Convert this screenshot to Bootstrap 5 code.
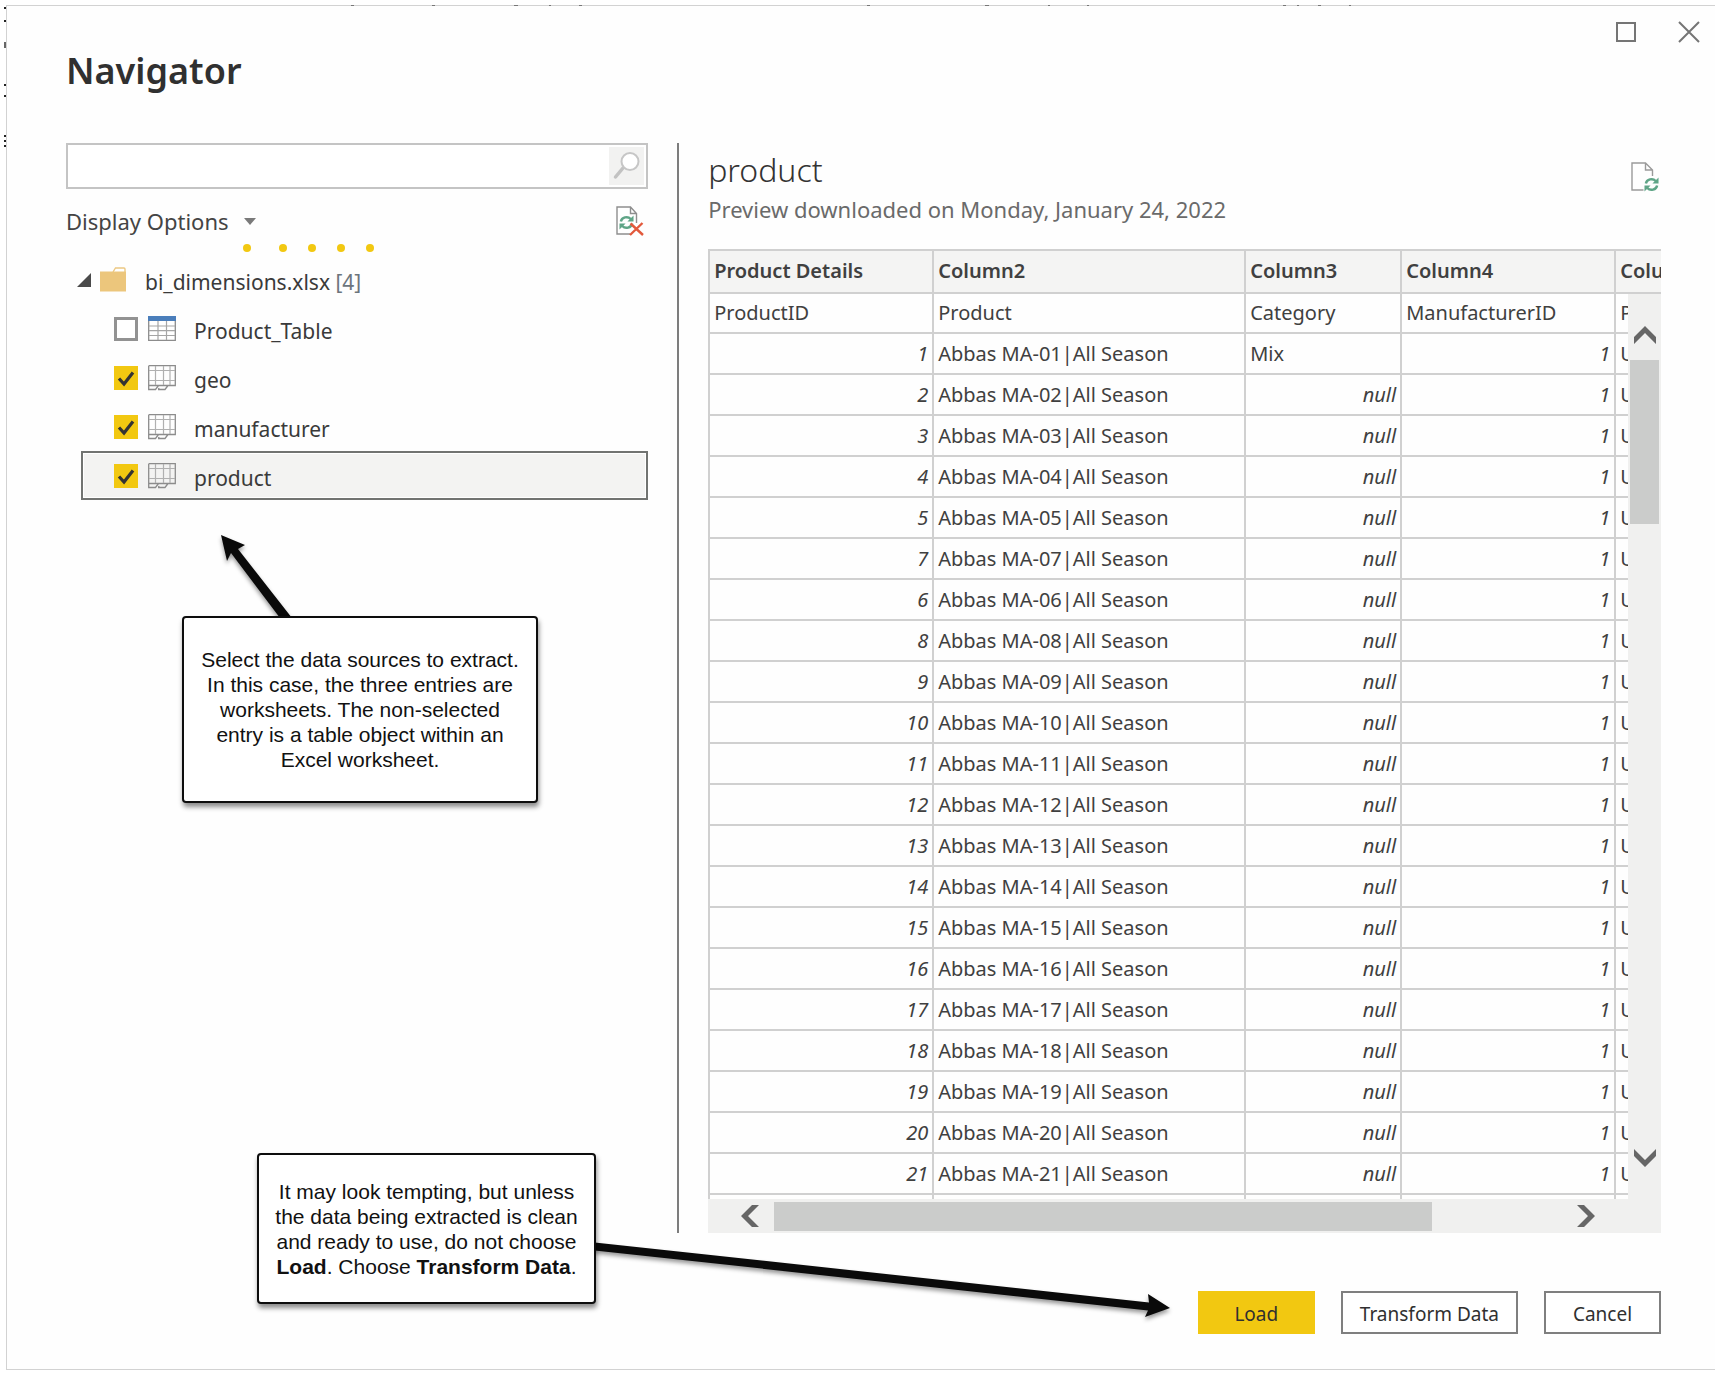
<!DOCTYPE html>
<html lang="en">
<head>
<meta charset="utf-8">
<meta name="viewport" content="width=device-width, initial-scale=1">
<title>Navigator</title>
<link rel="stylesheet" href="https://cdn.jsdelivr.net/npm/bootstrap@5.3.0/dist/css/bootstrap.min.css">
<style>
  :root {
    --ui: "Noto Sans", "Open Sans", sans-serif;
    --ink: #3a3a3a;
    --line: #d0d0d0;
    --gold: #f2c811;
  }
  body { background: #fff; font-family: var(--ui); color: var(--ink); }
  button { font-family: inherit; }

  .dialog-frame { margin: 5px 5px 0 6px; border: 1px solid #d2d2d2; border-right: 0; background: #fefefe; }
  .dialog-head { padding: 15px 15px 48px 59px; }
  .dialog-title { margin: 26px 0 0; font-size: 36px; line-height: 48px; font-weight: 600; color: #303030; }
  .win-btn { width: 22px; height: 22px; }
  .win-gap { gap: 41px; }
  .plain-btn { padding: 0; border: 0; background: none; display: flex; align-items: center; justify-content: center; }
  .plain-btn svg, .tree-row svg, .search-btn svg { display: block; flex: none; }

  .dialog-main { padding: 0 54px 0 59px; }
  .source-pane { flex: 0 0 36.5%; min-width: 0; }
  .preview-pane { flex: 1 1 0; min-width: 0; margin-left: 29px; padding-left: 29px; border-left: 2px solid #7d7d7d; }

  .search-box { height: 46px; border: 2px solid #c4c4c4; background: #fff; padding: 2px; }
  .search-box input { border: 0; border-radius: 0; box-shadow: none; background: transparent; font-size: 21px; }
  .search-btn { width: 35px; background: #f2f2f1; flex: none; border: 0; padding: 0; display: flex; align-items: center; justify-content: center; }

  .options-bar { margin-top: 15px; height: 34px; }
  .options-bar .options-btn { font-size: 22px; line-height: 34px; gap: 15px; color: #444; }
  .busy-dots { height: 10px; margin-top: 5px; padding-left: 177px; gap: 21px; }
  .busy-dots span { width: 8px; height: 8px; border-radius: 50%; background: var(--gold); }
  .busy-dots span:first-child { margin-right: 7px; }

  .tree-list { margin: 2px 0 0; padding: 0; list-style: none; font-size: 21px; line-height: 30px; }
  .tree-row { height: 49px; display: flex; align-items: center; }
  .tree-root { padding-left: 11px; }
  .tree-leaf { margin-left: 15px; padding-left: 31px; border: 2px solid transparent; }
  .tree-leaf.is-current { border-color: #717371; background: #f3f3f2; box-shadow: inset 0 0 0 1px #fff; }
  .tree-text { padding-top: 4px; }
  .tree-root .tree-text { margin-left: 18px; }
  .tree-leaf .tree-text { margin-left: 18px; cursor: pointer; flex: 1; }
  .tick { appearance: none; width: 24px; height: 24px; margin: 0 10px 0 0; flex: none; border: 3px solid #929292; background: #fff; }
  .tick:checked { border: 0; background: var(--gold) url("data:image/svg+xml,%3Csvg xmlns='http://www.w3.org/2000/svg' viewBox='0 0 24 24'%3E%3Cpath d='M5 12.500l5 5.500L19 6.500' fill='none' stroke='%23333' stroke-width='3.200'/%3E%3C/svg%3E"); }

  .preview-head { padding-top: 5px; }
  .preview-name { margin: 0; font-size: 32px; line-height: 44px; font-weight: 300; color: #333; }
  .preview-note { margin: 0; font-size: 22px; line-height: 34px; color: #6a6a6a; }
  .doc-btn { margin: 14px 2px 0 0; }

  .grid-shell { margin-top: 23px; }
  .grid-view { height: 950px; overflow: hidden; }
  .data-grid { width: 1110px; table-layout: fixed; border-collapse: separate; border-spacing: 0; border-top: 2px solid var(--line); border-left: 2px solid var(--line); font-size: 20px; line-height: 30px; color: #404040; }
  .data-grid th, .data-grid td { padding: 0 4px; height: 41px; border-right: 2px solid var(--line); border-bottom: 2px solid var(--line); vertical-align: middle; white-space: nowrap; overflow: hidden; background: #fefefe; }
  .data-grid th { height: 43px; padding-bottom: 2px; background: #f4f4f3; font-weight: 600; text-align: left; }
  .data-grid tr.label-row td { height: 40px; }
  .data-grid td.num { text-align: right; font-style: italic; }
  .w-a { width: 224px; } .w-b { width: 312px; } .w-c { width: 156px; } .w-d { width: 214px; }

  .v-bar { position: absolute; top: 45px; right: 0; bottom: 0; width: 33px; background: #f0f0ef; padding: 32px 2px 32px; }
  .h-bar { height: 34px; background: #f0f0ef; padding: 2px 66px 2px 33px; }
  .thumb { background: #cbcccb; }
  .v-bar .thumb { height: 164px; margin-top: 16px; }
  .h-bar .thumb { height: 29px; width: 77%; margin-left: 15px; }

  .dialog-foot { padding: 58px 54px 35px 59px; gap: 26px; }
  .dialog-foot .btn { height: 43px; min-width: 117px; border-radius: 0; font-size: 19px; line-height: 30px; padding: 2px 17px 0; border: 2px solid #7f7f7f; background: #fff; color: #303030; }
  .dialog-foot .btn.btn-load { background: var(--gold); border-color: var(--gold); }

  .callout-note { position: absolute; display: flex; align-items: center; justify-content: center; text-align: center; background: #fff; color: #111; border: 2px solid #0d0d0d; border-radius: 4px; box-shadow: 1px 4px 5px rgba(0,0,0,.45); font-family: "Liberation Sans", Arial, sans-serif; font-size: 21px; line-height: 25px; white-space: nowrap; }
  .note-sources { left: 182px; top: 616px; width: 356px; height: 187px; }
  .note-load { left: 257px; top: 1153px; width: 339px; height: 151px; }
  .overlay-art { position: absolute; left: 0; top: 0; pointer-events: none; filter: drop-shadow(0 3px 2px rgba(0,0,0,.4)); }
  .edge-marks { position: absolute; left: 0; top: 0; pointer-events: none; }
</style>
<script src="https://cdn.jsdelivr.net/npm/bootstrap@5.3.0/dist/js/bootstrap.bundle.min.js"></script>
</head>
<body class="position-relative">

<svg width="0" height="0" class="position-absolute" aria-hidden="true">
  <symbol id="sheet" viewBox="0 0 28 26">
    <path d="M.7 .7H27.300V20.500H20l-3 4H11.500l-1-1.500M.7 .7V20.500H20M.7 20.500V24.500H7.500l3-4M10 24.500h6" fill="none" stroke="#8c8c8c" stroke-width="1.300"/>
    <path d="M1 5.500H27M1 15.500H27M7.500 1V20M15.500 1V20M22 1V20" fill="none" stroke="#b0b0b0" stroke-width="1.200"/>
  </symbol>
  <symbol id="cycle" viewBox="0 0 16 16">
    <path d="M2 7A6 5.500 0 0 1 12.500 4.300M14 9A6 5.500 0 0 1 3.500 11.700" fill="none" stroke="#5fa587" stroke-width="2.600"/>
    <path d="M15.500 .5V7H9zM.5 15.500V9H7z" fill="#5fa587"/>
  </symbol>
</svg>

<main class="dialog-frame">
  <header class="dialog-head d-flex justify-content-between align-items-start">
    <h1 class="dialog-title">Navigator</h1>
    <div class="d-flex win-gap">
      <button type="button" class="plain-btn win-btn" aria-label="Maximize"><svg width="20" height="20"><rect x="1" y="1" width="18" height="18" fill="none" stroke="#757575" stroke-width="2"/></svg></button>
      <button type="button" class="plain-btn win-btn" aria-label="Close"><svg width="22" height="22"><path d="M1 1L21 21M21 1L1 21" stroke="#757575" stroke-width="2"/></svg></button>
    </div>
  </header>

  <div class="dialog-main d-flex">
    <section class="source-pane" aria-label="Sources">
      <div class="search-box d-flex">
        <input type="search" class="form-control" aria-label="Search">
        <button type="button" class="search-btn" aria-label="Run search"><svg width="28" height="30"><path d="M10 17L2.500 26" stroke="#c2c2c2" stroke-width="3.500" stroke-linecap="round"/><circle cx="17" cy="10.500" r="8.500" fill="#fff" stroke="#c6c6c6" stroke-width="2"/></svg></button>
      </div>

      <div class="options-bar d-flex justify-content-between align-items-center">
        <button type="button" class="plain-btn options-btn">Display Options<svg width="12" height="7"><path d="M0 0H12L6 7z" fill="#7a7a7a"/></svg></button>
        <button type="button" class="plain-btn me-1" aria-label="Cancel refresh">
          <svg width="28" height="30" viewBox="0 0 28 30"><path d="M20.500 17V7.500L14.500 1H1V28H14M14.500 1V7.500H20.500" fill="#fff" stroke="#8e8e8e" stroke-width="1.400"/><use href="#cycle" x="3" y="9" width="15" height="15"/><path d="M14.500 17.500L27 29M26.500 17L14 29" stroke="#e2593c" stroke-width="2.400"/></svg>
        </button>
      </div>
      <div class="busy-dots d-flex align-items-center" role="status" aria-label="Loading"><span></span><span></span><span></span><span></span><span></span></div>

      <ul class="tree-list">
        <li class="tree-row tree-root">
          <svg width="14" height="14"><path d="M14 0V14H0z" fill="#4a4a4a"/></svg>
          <svg class="ms-2" width="28" height="25" viewBox="0 0 28 25"><path d="M14 5l2.500-4H25q1 0 1 1V5" fill="#fff" stroke="#ecc882" stroke-width="1.400"/><path d="M1 4.500H27V24.500H1z" fill="#ecc67c"/></svg>
          <span class="tree-text">bi_dimensions.xlsx <span class="text-secondary">[4]</span></span>
        </li>
        <li class="tree-row tree-leaf">
          <input class="tick" type="checkbox" id="pick-table">
          <svg width="28" height="25"><path d="M.7 5V24.300H27.300V5" fill="#fff" stroke="#8c8c8c" stroke-width="1.300"/><path d="M1 10H27M1 14.700H27M1 19.500H27M10 5V24M18.500 5V24" stroke="#a5a5a5" stroke-width="1.200"/><path d="M0 0H28V5H0z" fill="#4a7ebb"/></svg>
          <label class="tree-text" for="pick-table">Product_Table</label>
        </li>
        <li class="tree-row tree-leaf">
          <input class="tick" type="checkbox" id="pick-geo" checked>
          <svg width="28" height="26"><use href="#sheet"/></svg>
          <label class="tree-text" for="pick-geo">geo</label>
        </li>
        <li class="tree-row tree-leaf">
          <input class="tick" type="checkbox" id="pick-manufacturer" checked>
          <svg width="28" height="26"><use href="#sheet"/></svg>
          <label class="tree-text" for="pick-manufacturer">manufacturer</label>
        </li>
        <li class="tree-row tree-leaf is-current">
          <input class="tick" type="checkbox" id="pick-product" checked>
          <svg width="28" height="26"><use href="#sheet"/></svg>
          <label class="tree-text" for="pick-product">product</label>
        </li>
      </ul>
    </section>

    <section class="preview-pane" aria-label="Preview">
      <div class="preview-head d-flex justify-content-between align-items-start">
        <div>
          <h2 class="preview-name">product</h2>
          <p class="preview-note">Preview downloaded on Monday, January 24, 2022</p>
        </div>
        <button type="button" class="plain-btn doc-btn" aria-label="Refresh preview">
          <svg width="28" height="30" viewBox="0 0 28 30"><path d="M21.500 14V8L14.500 1H1V28H12.500M14.500 1V8H21.500" fill="none" stroke="#9a9a9a" stroke-width="1.400"/><use href="#cycle" x="13" y="15" width="15" height="15"/></svg>
        </button>
      </div>

      <div class="grid-shell">
        <div class="position-relative">
          <div class="grid-view">
            <table class="data-grid">
              <colgroup><col class="w-a"><col class="w-b"><col class="w-c"><col class="w-d"><col></colgroup>
              <thead><tr><th>Product Details</th><th>Column2</th><th>Column3</th><th>Column4</th><th>Column5</th></tr></thead>
              <tbody id="rows">
                <tr class="label-row"><td>ProductID</td><td>Product</td><td>Category</td><td>ManufacturerID</td><td>PriceBand</td></tr>
              </tbody>
            </table>
          </div>
          <div class="v-bar d-flex flex-column">
            <button type="button" class="plain-btn" aria-label="Scroll up"><svg width="22" height="18"><path d="M0 11L11 0L22 11V18L11 7L0 18z" fill="#666"/></svg></button>
            <div class="thumb"></div>
            <button type="button" class="plain-btn mt-auto" aria-label="Scroll down"><svg width="22" height="18"><path d="M0 7L11 18L22 7V0L11 11L0 0z" fill="#666"/></svg></button>
          </div>
        </div>
        <div class="h-bar d-flex align-items-center">
          <button type="button" class="plain-btn" aria-label="Scroll left"><svg width="18" height="22"><path d="M11 0L0 11L11 22H18L7 11L18 0z" fill="#666"/></svg></button>
          <div class="thumb"></div>
          <button type="button" class="plain-btn ms-auto" aria-label="Scroll right"><svg width="18" height="22"><path d="M7 0L18 11L7 22H0L11 11L0 0z" fill="#666"/></svg></button>
        </div>
      </div>
    </section>
  </div>

  <footer class="dialog-foot d-flex justify-content-end">
    <button type="button" class="btn btn-load">Load</button>
    <button type="button" class="btn">Transform Data</button>
    <button type="button" class="btn">Cancel</button>
  </footer>
</main>

<!-- slivers of the document that shows behind the dialog's edges -->
<svg class="edge-marks" width="1400" height="160" aria-hidden="true">
  <path d="M4 8h2M4 21h2M4 85h2M4 96h2M4 136h2M4 141h2M4 146h2" stroke="#222" stroke-width="2"/>
  <path d="M5 42v6" stroke="#333" stroke-width="1.500"/>
  <path d="M351 5.500h3M432 5.500h3M514 5.500h4M549 5.500h2M579 5.500h3M867 5.500h3M985 5.500h4M1048 5.500h2M1087 5.500h2M1283 5.500h3M1297 5.500h2M1318 5.500h3M1349 5.500h2" stroke="#777" stroke-width="1"/>
</svg>

<svg class="overlay-art" width="1200" height="1340" aria-hidden="true">
  <path d="M221 535L245 545L238 549L292 618H280L231 553L227 561z" fill="#0a0a0a"/>
  <path d="M590 1242L1149 1302.500L1148 1294L1170 1308L1145 1317L1148 1310.500L590 1250z" fill="#0a0a0a"/>
</svg>

<aside class="callout-note note-sources"><div>Select the data sources to extract.<br>In this case, the three entries are<br>worksheets. The non-selected<br>entry is a table object within an<br>Excel worksheet.</div></aside>
<aside class="callout-note note-load"><div>It may look tempting, but unless<br>the data being extracted is clean<br>and ready to use, do not choose<br><b>Load</b>. Choose <b>Transform Data</b>.</div></aside>

<script>
  const ids = [1, 2, 3, 4, 5, 7, 6, 8, 9, 10, 11, 12, 13, 14, 15, 16, 17, 18, 19, 20, 21, 22];
  const body = document.getElementById("rows");
  ids.forEach((id, i) => {
    const category = i === 0 ? "<td>Mix</td>" : '<td class="num">null</td>';
    body.insertAdjacentHTML("beforeend",
      `<tr><td class="num">${id}</td><td>Abbas MA-${String(id).padStart(2, "0")}|All Season</td>${category}<td class="num">1</td><td>USD</td></tr>`);
  });
</script>
</body>
</html>
